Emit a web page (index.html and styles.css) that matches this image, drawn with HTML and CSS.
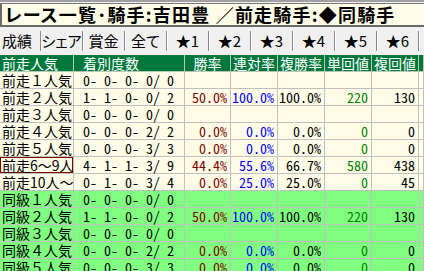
FILE: index.html
```html
<!DOCTYPE html>
<html lang="ja">
<head>
<meta charset="utf-8">
<link rel="stylesheet" href="styles.css">
</head>
<body>
<div class="topbar"></div>
<div class="title">レース一覧･騎手:吉田豊 ／前走騎手:◆同騎手</div>
<div class="tabs">
  <div class="tab sel">成績</div>
  <div class="tab">シェア</div>
  <div class="tab">賞金</div>
  <div class="tab">全て</div>
  <div class="tab">★1</div>
  <div class="tab">★2</div>
  <div class="tab">★3</div>
  <div class="tab">★4</div>
  <div class="tab">★5</div>
  <div class="tab">★6</div>
  <div class="tab last"></div>
</div>
<div class="grid">
  <div class="row head">
    <div class="c l">前走人気</div><div class="c d">着別度数</div><div class="c">勝率</div><div class="c">連対率</div><div class="c">複勝率</div><div class="c">単回値</div><div class="c">複回値</div><div class="c"></div>
  </div>
  <div class="row">
    <div class="c l">前走１人気</div><div class="c d">0- 0- 0- 0/ 0</div><div class="c n r1"></div><div class="c n r2"></div><div class="c n"></div><div class="c n r4"></div><div class="c n"></div><div class="c"></div>
  </div>
  <div class="row">
    <div class="c l">前走２人気</div><div class="c d">1- 1- 0- 0/ 2</div><div class="c n r1">50.0%</div><div class="c n r2">100.0%</div><div class="c n">100.0%</div><div class="c n r4">220</div><div class="c n">130</div><div class="c"></div>
  </div>
  <div class="row">
    <div class="c l">前走３人気</div><div class="c d">0- 0- 0- 0/ 0</div><div class="c n r1"></div><div class="c n r2"></div><div class="c n"></div><div class="c n r4"></div><div class="c n"></div><div class="c"></div>
  </div>
  <div class="row">
    <div class="c l">前走４人気</div><div class="c d">0- 0- 0- 2/ 2</div><div class="c n r1">0.0%</div><div class="c n r2">0.0%</div><div class="c n">0.0%</div><div class="c n r4">0</div><div class="c n">0</div><div class="c"></div>
  </div>
  <div class="row">
    <div class="c l">前走５人気</div><div class="c d">0- 0- 0- 3/ 3</div><div class="c n r1">0.0%</div><div class="c n r2">0.0%</div><div class="c n">0.0%</div><div class="c n r4">0</div><div class="c n">0</div><div class="c"></div>
  </div>
  <div class="row">
    <div class="c l focus">前走6～9人</div><div class="c d">4- 1- 1- 3/ 9</div><div class="c n r1">44.4%</div><div class="c n r2">55.6%</div><div class="c n">66.7%</div><div class="c n r4">580</div><div class="c n">438</div><div class="c"></div>
  </div>
  <div class="row">
    <div class="c l">前走10人～</div><div class="c d">0- 1- 0- 3/ 4</div><div class="c n r1">0.0%</div><div class="c n r2">25.0%</div><div class="c n">25.0%</div><div class="c n r4">0</div><div class="c n">45</div><div class="c"></div>
  </div>
  <div class="row g">
    <div class="c l">同級１人気</div><div class="c d">0- 0- 0- 0/ 0</div><div class="c n r1"></div><div class="c n r2"></div><div class="c n"></div><div class="c n r4"></div><div class="c n"></div><div class="c"></div>
  </div>
  <div class="row g">
    <div class="c l">同級２人気</div><div class="c d">1- 1- 0- 0/ 2</div><div class="c n r1">50.0%</div><div class="c n r2">100.0%</div><div class="c n">100.0%</div><div class="c n r4">220</div><div class="c n">130</div><div class="c"></div>
  </div>
  <div class="row g">
    <div class="c l">同級３人気</div><div class="c d">0- 0- 0- 0/ 0</div><div class="c n r1"></div><div class="c n r2"></div><div class="c n"></div><div class="c n r4"></div><div class="c n"></div><div class="c"></div>
  </div>
  <div class="row g">
    <div class="c l">同級４人気</div><div class="c d">0- 0- 0- 2/ 2</div><div class="c n r1">0.0%</div><div class="c n r2">0.0%</div><div class="c n">0.0%</div><div class="c n r4">0</div><div class="c n">0</div><div class="c"></div>
  </div>
  <div class="row g">
    <div class="c l">同級５人気</div><div class="c d">0- 0- 0- 3/ 3</div><div class="c n r1">0.0%</div><div class="c n r2">0.0%</div><div class="c n">0.0%</div><div class="c n r4">0</div><div class="c n">0</div><div class="c"></div>
  </div>
</div>
</body>
</html>
```
FILE: styles.css
```css
html, body {
  margin: 0;
  padding: 0;
}
body {
  width: 424px;
  height: 271px;
  overflow: hidden;
  background: #f0f0f0;
  font-family: "Noto Sans CJK JP", sans-serif;
  color: #000;
}
.topbar {
  height: 2px;
  background: #a0a0a0;
}
.title {
  margin-top: 1px;
  height: 21px;
  border-top: 1px solid #7a7a7a;
  border-left: 2px solid #6a6a6a;
  border-bottom: 2px solid #6a6a6a;
  background: #fffde8;
  font-weight: bold;
  font-size: 18px;
  letter-spacing: 1.2px;
  line-height: 21px;
  padding-left: 3px;
  font-feature-settings: "palt";
  white-space: nowrap;
}
.tabs {
  display: flex;
  height: 20px;
  margin-top: 4px;
  font-size: 15px;
  line-height: 19px;
  font-feature-settings: "palt";
}
.tab {
  flex: 0 0 42px;
  box-sizing: border-box;
  text-align: center;
  border-left: 1px solid #8a8a8a;
  box-shadow: inset 1px 0 #ffffff;
  white-space: nowrap;
}
.tab.sel {
  flex-basis: 40px;
  border-left: none;
  box-shadow: none;
  text-align: left;
  padding-left: 2px;
}
.tab.last {
  flex: 1 1 auto;
}
.grid {
  margin-top: 4px;
  font-size: 14px;
}
.row {
  display: grid;
  grid-template-columns: 74px 111px 46px 47px 47px 47px 47px 5px;
  height: 17px;
  background: #fffde8;
}
.row.g {
  background: #80ff80;
}
.row.head {
  background: #00783c;
  color: #ffffff;
}
.c {
  box-sizing: border-box;
  border-right: 1px solid #c0c0c0;
  border-bottom: 1px solid #c0c0c0;
  line-height: 16px;
  white-space: pre;
}
.head .c {
  text-align: center;
  border-color: #b8c8b8;
}
.c.l {
  text-align: left;
  padding-left: 2px;
}
.c.d {
  text-align: left;
  padding-left: 9px;
  font-feature-settings: "hwid";
}
.c.n {
  text-align: right;
  padding-right: 3px;
  font-feature-settings: "hwid";
}
.r1 { color: #800000; }
.r2 { color: #0000ff; }
.r4 { color: #008000; }
.c.focus {
  box-shadow: inset 0 0 0 1px #800000;
}
```
